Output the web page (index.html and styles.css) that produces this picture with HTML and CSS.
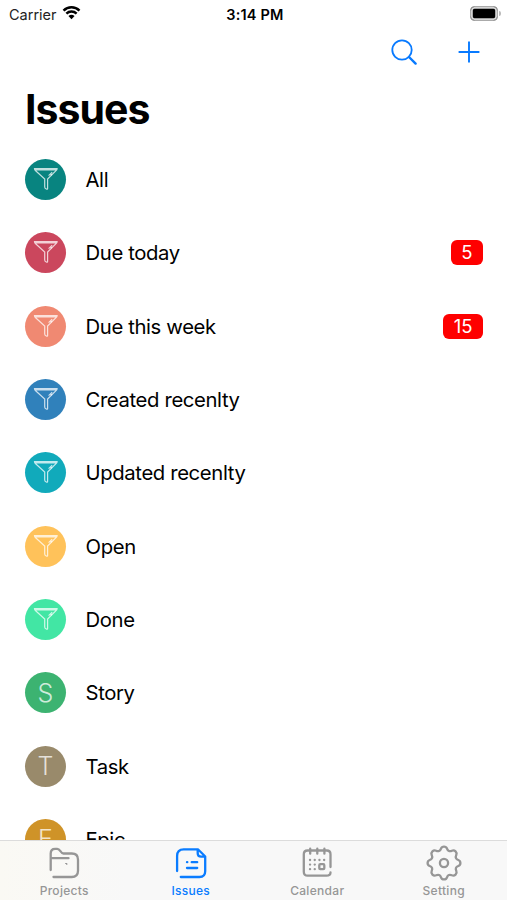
FILE: index.html
```
<!DOCTYPE html>
<html lang="en">
  <head>
    <meta charset="UTF-8" />
    <meta name="viewport" content="width=device-width, initial-scale=1.0" />
    <title>Issues</title>
    <link rel="stylesheet" href="styles.css">
  </head>
  <body>
    <!-- Shared funnel icon -->
    <svg class="symbols">
      <symbol id="funnel" viewBox="0 0 26 24">
        <path d="M1.5 1.6h22.6q0 1-.6 1.6L14.6 12v9.4q0 1.2-1.3.6-1.6-.7-1.6-2.1V12L2.1 3.2q-.6-.6-.6-1.6zM2 2.8h21.6" />
        <path class="shine" d="M15.6 8.6l3.6-3.3M17.8 8.2l1-.9" />
      </symbol>
    </svg>

    <div class="screen">
      <header class="status-bar">
        <div class="carrier">
          <span>Carrier</span>
          <svg class="wifi" viewBox="0 0 20 15">
            <path d="M1.6 5.5a12 12 0 0 1 16.8 0M4.6 8.7a7.8 7.8 0 0 1 10.8 0" />
            <path class="wifi-dot" d="M10 14.6l-3.2-3.3a4.7 4.7 0 0 1 6.4 0z" />
          </svg>
        </div>
        <div class="time">3:14 PM</div>
        <div class="battery"><span class="battery-body"></span><span class="battery-cap"></span></div>
      </header>

      <nav class="toolbar">
        <svg class="search" viewBox="0 0 26 26">
          <circle cx="11" cy="11" r="9.7" />
          <path class="handle" d="M18 18l6.6 6.6" />
        </svg>
        <svg class="add" viewBox="0 0 22 22">
          <path d="M11 .6v20.8M.6 11h20.8" />
        </svg>
      </nav>

      <h1>Issues</h1>

      <ul class="list">
        <li><span class="avatar all"><svg><use href="#funnel" /></svg></span><span class="name">All</span></li>
        <li><span class="avatar today"><svg><use href="#funnel" /></svg></span><span class="name">Due today</span><span class="badge">5</span></li>
        <li><span class="avatar week"><svg><use href="#funnel" /></svg></span><span class="name">Due this week</span><span class="badge">15</span></li>
        <li><span class="avatar created"><svg><use href="#funnel" /></svg></span><span class="name">Created recenlty</span></li>
        <li><span class="avatar updated"><svg><use href="#funnel" /></svg></span><span class="name">Updated recenlty</span></li>
        <li><span class="avatar open"><svg><use href="#funnel" /></svg></span><span class="name">Open</span></li>
        <li><span class="avatar done"><svg><use href="#funnel" /></svg></span><span class="name">Done</span></li>
        <li><span class="avatar story">S</span><span class="name">Story</span></li>
        <li><span class="avatar task">T</span><span class="name">Task</span></li>
        <li><span class="avatar epic">E</span><span class="name">Epic</span></li>
      </ul>

      <footer class="tab-bar">
        <div class="tab">
          <svg viewBox="0 0 36 36">
            <path d="M4.7 25V8.5c0-3 1.6-4.7 4.4-4.7h2.2c3 0 3.2 4.7 6.2 4.7h8.3c4 0 6.2 2.2 6.2 6.2v11c0 4.3-2.2 6.3-6.3 6.3H7.5M5 13.2h17.5" />
            <path class="fine" d="M19.6 18.5h1.2v1" />
          </svg>
          <span>Projects</span>
        </div>
        <div class="tab active">
          <svg viewBox="0 0 36 36">
            <path d="M4.1 26V11c0-4.4 2.3-6.7 6.6-6.7h14.2c2.7 2.6 4.8 4.6 7.3 7.2v14.8c0 3.8-2 5.7-5.8 5.7H7.8M24.7 4.5v3.7c0 2.3 1.2 3.5 3.5 3.5h4" />
            <path d="M14 17.2h.3M18.7 17.2h5.5M14 23h10.2" />
          </svg>
          <span>Issues</span>
        </div>
        <div class="tab">
          <svg viewBox="0 0 36 36">
            <path d="M31.5 22V9.2c0-2.5-1.2-3.7-3.7-3.7H8.5C6 5.5 4.8 6.7 4.8 9.2v17.5c0 2.7 1.3 4 4 4h18.5c2.7 0 4.2-1.2 4.2-3.2M11.2 3.7v5M18.3 3.7v5M25.4 3.7v5" />
            <path class="dots" d="M11 15h.1M15.7 15h.1M20.4 15h.1M25.1 15h.1M11 19.6h.1M15.7 19.6h.1M11 24.2h.1M15.7 24.2h.1" />
            <rect x="20.3" y="19.2" width="5" height="5" rx="1" />
          </svg>
          <span>Calendar</span>
        </div>
        <div class="tab">
          <svg viewBox="0 0 36 36">
            <path d="M15 3.7c1-2.8 5-2.8 6 0 .8 2.4 2.7 3.1 4.9 2 2.7-1.2 5.6 1.7 4.4 4.4-1.1 2.2-.4 4.1 2 4.9 2.8 1 2.8 5 0 6-2.4.8-3.1 2.7-2 4.9 1.2 2.7-1.7 5.6-4.4 4.4-2.2-1.1-4.1-.4-4.9 2-1 2.8-5 2.8-6 0-.8-2.4-2.7-3.1-4.9-2-2.7 1.2-5.6-1.7-4.4-4.4 1.1-2.2.4-4.1-2-4.9-2.8-1-2.8-5 0-6 2.4-.8 3.1-2.7 2-4.9C4.5 7.4 7.4 4.5 10.1 5.7c2.2 1.1 4.1.4 4.9-2z" />
            <circle cx="18" cy="18" r="4.1" />
          </svg>
          <span>Setting</span>
        </div>
      </footer>
    </div>
  </body>
</html>
```
FILE: styles.css
```
body {
  margin: 0;
  background-color: #fff;
  color: #000;
  font-family: Inter, "Liberation Sans", sans-serif;
}

svg {
  display: block;
  fill: none;
  stroke: currentColor;
}

.symbols {
  display: none;
}

.screen {
  display: flex;
  flex-direction: column;
  height: 900px;
  overflow: hidden;
}

.status-bar {
  display: grid;
  grid-template-columns: 1fr auto 1fr;
  align-items: center;
  flex-shrink: 0;
  height: 28px;
  padding: 0 6px 0 9px;
  font-size: 14.5px;
}

.carrier {
  display: flex;
  align-items: center;
  gap: 5px;
  color: #222;
}

.wifi {
  width: 19px;
  height: 15px;
  color: #000;
  stroke-width: 2.6;
  margin-top: -3px;
}

.wifi-dot {
  fill: currentColor;
  stroke: none;
}

.time {
  font-weight: 600;
  letter-spacing: 0.2px;
}

.battery {
  display: flex;
  align-items: center;
  justify-self: end;
  gap: 1px;
  margin-top: -1px;
}

.battery-body {
  box-sizing: border-box;
  width: 28px;
  height: 15px;
  border: 1px solid #aaa;
  border-radius: 4.5px;
  background-color: #000;
  box-shadow: inset 0 0 0 1.8px #d5d5d5;
}

.battery-cap {
  width: 2px;
  height: 5px;
  border-radius: 0 2px 2px 0;
  background-color: #bbb;
}

.toolbar {
  display: flex;
  justify-content: flex-end;
  align-items: center;
  flex-shrink: 0;
  gap: 41px;
  height: 49px;
  padding-right: 27px;
  color: #087aff;
}

.search {
  width: 26px;
  height: 26px;
  margin-top: -1px;
  stroke-width: 1.8;
}

.handle {
  stroke-width: 2.4;
  stroke-linecap: round;
}

.add {
  width: 22px;
  height: 22px;
  margin-top: -1px;
  stroke-width: 1.9;
}

h1 {
  flex-shrink: 0;
  height: 66px;
  margin: 0;
  padding-left: 25px;
  font-size: 41px;
  font-weight: 700;
  letter-spacing: -1px;
  line-height: 64px;
}

.list {
  flex: 1;
  min-height: 0;
  overflow: hidden;
  margin: 0;
  padding: 0;
  list-style: none;
}

.list li {
  display: flex;
  align-items: center;
  height: 73.3px;
  padding: 0 24px 0 25px;
}

.avatar {
  display: flex;
  align-items: center;
  justify-content: center;
  width: 41px;
  height: 41px;
  margin-right: 19.5px;
  border-radius: 50%;
  color: rgba(255, 255, 255, 0.75);
  font-size: 25px;
  font-weight: 300;
}

.avatar svg {
  width: 26px;
  height: 24px;
  margin-bottom: 1px;
  stroke-width: 1.2;
}

.avatar .shine {
  stroke-width: 1;
}

.all { background-color: #088480; }
.today { background-color: #cb475d; }
.week { background-color: #f08972; }
.created { background-color: #3081bb; }
.updated { background-color: #11aabb; }
.open { background-color: #ffc25a; }
.done { background-color: #42e6a4; }
.story { background-color: #3cb371; }
.task { background-color: #998a6b; }
.epic { background-color: #cf9328; }

.name {
  flex: 1;
  font-size: 20.3px;
  letter-spacing: -0.37px;
}

.badge {
  padding: 0 10.5px;
  border-radius: 6px;
  background-color: #fe0000;
  color: #fff;
  font-size: 18.5px;
  line-height: 25px;
}

.tab-bar {
  display: flex;
  flex-shrink: 0;
  box-sizing: border-box;
  height: 60px;
  padding-left: 1px;
  border-top: 1px solid #dcdcdc;
  background: linear-gradient(90deg, #faf9f4, #f8f8f8 25%);
}

.tab {
  display: flex;
  flex: 1;
  flex-direction: column;
  align-items: center;
  padding-top: 4px;
  color: #969696;
  font-size: 12px;
  font-weight: 500;
  line-height: 16px;
  letter-spacing: 0.3px;
}

.tab svg {
  width: 36px;
  height: 36px;
  margin-bottom: 2px;
  stroke-width: 2.3;
  stroke-linecap: round;
  stroke-linejoin: round;
}

.tab .fine {
  stroke-width: 1.1;
}

.tab .dots {
  stroke-width: 2.3;
}

.tab.active {
  color: #0a7cff;
}
```
